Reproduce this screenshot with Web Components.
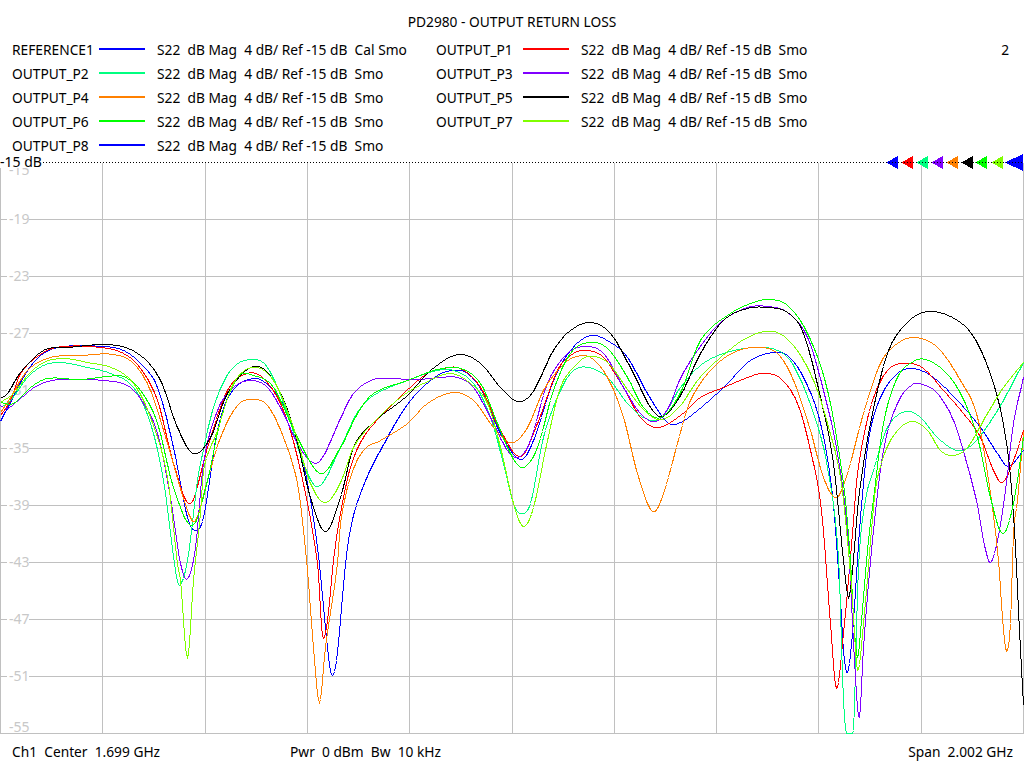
<!DOCTYPE html>
<html lang="en">
<head>
<meta charset="utf-8">
<title>PD2980 - OUTPUT RETURN LOSS</title>
<style>
html,body{margin:0;padding:0;background:#fff}
body{width:1024px;height:768px;overflow:hidden;font-family:"Noto Sans","Open Sans","Liberation Sans",sans-serif;font-size:13.75px;color:#000}
</style>
</head>
<body>
<vna-screen>
  <vna-title slot="title">PD2980 - OUTPUT RETURN LOSS</vna-title>
  <vna-legend slot="legend" channel="2">
    <vna-item slot="a" name="REFERENCE1" color="#0000ff">S22  dB Mag  4 dB/ Ref -15 dB  Cal Smo</vna-item>
    <vna-item slot="a" name="OUTPUT_P2" color="#00ff80">S22  dB Mag  4 dB/ Ref -15 dB  Smo</vna-item>
    <vna-item slot="a" name="OUTPUT_P4" color="#ff8000">S22  dB Mag  4 dB/ Ref -15 dB  Smo</vna-item>
    <vna-item slot="a" name="OUTPUT_P6" color="#00ff00">S22  dB Mag  4 dB/ Ref -15 dB  Smo</vna-item>
    <vna-item slot="a" name="OUTPUT_P8" color="#0000ff">S22  dB Mag  4 dB/ Ref -15 dB  Smo</vna-item>
    <vna-item slot="b" name="OUTPUT_P1" color="#ff0000">S22  dB Mag  4 dB/ Ref -15 dB  Smo</vna-item>
    <vna-item slot="b" name="OUTPUT_P3" color="#8000ff">S22  dB Mag  4 dB/ Ref -15 dB  Smo</vna-item>
    <vna-item slot="b" name="OUTPUT_P5" color="#000000">S22  dB Mag  4 dB/ Ref -15 dB  Smo</vna-item>
    <vna-item slot="b" name="OUTPUT_P7" color="#80ff00">S22  dB Mag  4 dB/ Ref -15 dB  Smo</vna-item>
  </vna-legend>
  <vna-chart slot="chart"></vna-chart>
  <vna-footer slot="footer">
    <span slot="ch">Ch1  Center  1.699 GHz</span>
    <span slot="pwr">Pwr  0 dBm  Bw  10 kHz</span>
    <span slot="span">Span  2.002 GHz</span>
  </vna-footer>
</vna-screen>
<script>
function def(name, css, html, extra){
  class C extends HTMLElement{
    constructor(){super();this.attachShadow({mode:'open'}).innerHTML='<style>'+css+'</style>'+html;}
    connectedCallback(){ if(extra) extra(this); }
  }
  customElements.define(name,C);
}
def('vna-screen',':host{display:flex;flex-direction:column;width:1024px;height:768px;white-space:pre}',
 '<slot name="title"></slot><slot name="legend"></slot><slot name="chart"></slot><slot name="footer"></slot>');
def('vna-title',':host{display:block;height:42px;box-sizing:border-box;padding-top:14px;line-height:16px;text-align:center}','<slot></slot>');
def('vna-legend',`:host{display:flex;height:112px;padding-left:12px;padding-right:15px}
 .col{display:flex;flex-direction:column;gap:8px;width:424px}
 .ch{margin-left:auto;line-height:16px;height:16px}`,
 '<div class="col"><slot name="a"></slot></div><div class="col"><slot name="b"></slot></div><div class="ch"></div>',
 el=>{el.shadowRoot.querySelector('.ch').textContent=el.getAttribute('channel');});
def('vna-item',`:host{display:flex;height:16px;line-height:16px;white-space:pre}
 .n{width:87px;flex:none}
 .l{width:46px;height:2px;margin:6px 12px 0 0;flex:none}`,
 '<span class="n"></span><span class="l"></span><slot></slot>',
 el=>{el.shadowRoot.querySelector('.n').textContent=el.getAttribute('name');
      el.shadowRoot.querySelector('.l').style.background=el.getAttribute('color');});
def('vna-footer',`:host{display:grid;grid-template-columns:278px 1fr auto;height:34px;box-sizing:border-box;padding:10px 11px 0 12px;line-height:16px;white-space:pre}`,
 '<slot name="ch"></slot><slot name="pwr"></slot><slot name="span"></slot>');

const TRACES=[
['#0000ff','0,421 10,402 27,370 43,353 63,346 103,346 123,350 140,363 157,387 173,447 187,517 195,530 203,517 217,430 230,393 253,378 270,387 287,413 303,463 317,547 327,647 331,674 336,660 347,547 360,493 387,437 410,400 437,375 453,370 467,373 483,393 500,433 520,459 533,440 553,380 570,350 590,335 610,342 627,357 647,393 667,422 680,422 697,410 723,387 750,360 773,352 787,355 803,377 820,423 832,495 840,600 843,650 847,672 852,633 860,517 868,440 880,397 897,373 913,368 933,377 957,400 980,427 997,453 1008,466 1023,450'],
['#ff0000','0,415 10,400 20,373 43,352 63,346 100,347 123,353 140,368 157,400 173,463 190,503 207,447 227,390 247,373 263,378 283,410 300,470 317,563 322,635 327,620 333,560 340,513 350,467 363,437 383,413 403,393 427,373 443,368 460,368 480,387 500,430 520,456 537,423 557,370 573,353 587,350 603,357 623,387 640,417 657,427 680,415 700,397 723,387 747,377 762,373 780,378 797,403 810,450 821,510 830,623 836,688 843,633 852,533 857,473 870,407 887,370 907,363 923,368 943,390 963,413 980,437 993,470 1002,482 1013,460 1023,430'],
['#00ff80','0,407 10,400 27,377 43,365 60,362 87,367 110,373 133,387 150,423 163,480 175,570 179,585 187,560 197,480 200,463 213,407 230,370 250,359 267,367 287,413 303,463 318,486 340,447 357,412 373,395 407,380 437,370 453,370 473,383 490,417 503,463 513,503 520,513 530,503 543,437 560,390 573,370 588,367 607,377 627,403 643,417 660,418 680,387 700,365 723,353 753,347 777,350 793,365 813,413 827,467 838,557 843,700 848,745 853,730 858,567 865,500 873,470 887,427 905,411 920,417 937,437 957,450 973,443 997,410 1023,362'],
['#8000ff','0,405 7,408 20,398 37,385 60,379 113,381 130,387 143,403 157,433 170,497 180,563 187,578 195,547 203,463 217,410 233,387 250,380 267,387 283,413 297,443 312,462 322,457 340,418 353,393 370,380 383,378 417,379 440,377 457,377 473,387 490,417 507,450 518,457 530,440 547,383 567,353 585,346 603,353 623,387 640,413 655,421 668,407 680,378 697,350 720,322 747,307 767,306 787,312 807,337 823,390 837,453 847,533 855,677 859,717 863,647 872,540 883,450 897,403 912,384 922,384 937,393 953,420 965,458 977,505 984,545 990,562 997,540 1005,490 1013,423 1023,377'],
['#ff8000','0,412 10,397 27,370 50,357 80,355 113,354 133,363 150,390 167,443 187,510 195,520 207,480 220,437 237,405 252,399 267,405 283,437 297,483 303,530 307,570 313,647 319,702 325,647 337,563 340,523 350,477 363,450 380,440 407,423 427,403 453,392 473,400 490,423 503,438 513,442 527,427 543,390 560,367 573,357 590,357 607,377 623,417 637,473 652,511 663,493 680,432 690,400 710,370 733,352 757,347 777,353 793,380 810,430 823,477 836,497 847,473 863,413 880,363 897,343 915,337 937,347 960,380 977,417 990,493 998,560 1002,617 1006,651 1010,623 1013,533 1017,500 1023,432'],
['#000000','0,398 7,393 20,372 43,350 67,347 113,344.5 140,355 160,380 177,427 193,453 210,437 227,393 253,366 273,380 293,427 310,497 325,531 340,497 353,447 373,422 407,395 430,370 458,354 480,363 500,387 517,401 532,392 553,350 570,330 590,322 610,333 633,373 650,407 662,416 680,395 700,353 723,320 747,308 767,307 787,312 803,333 820,397 833,463 843,560 848,597 852,570 858,500 870,423 887,353 907,322 928,311 957,320 977,343 997,397 1008,457 1014,530 1019,630 1023,705'],
['#00ff00','0,402 13,403 30,387 47,378 80,379 107,376 123,376 140,390 157,423 173,487 192,525 207,480 220,420 237,377 253,375 273,387 297,437 320,473 340,447 357,413 373,393 407,380 437,369 460,368 480,383 497,423 512,457 523,467 537,447 553,390 570,353 588,342 607,348 627,377 643,407 660,417 680,392 700,340 730,313 753,302 770,299 787,305 807,333 827,390 843,483 850,560 853,617 857,657 861,620 867,550 872,507 883,423 897,377 913,361 925,359 943,370 960,393 977,437 990,497 1002,533 1013,503 1023,437'],
['#80ff00','0,402 13,393 27,375 43,362 63,358 87,362 113,368 133,383 150,417 167,477 177,563 180,580 187,657 193,580 200,513 203,470 217,430 233,383 253,367 273,380 293,427 310,483 325,502 340,482 353,447 373,422 400,397 423,383 450,373 470,383 487,403 500,447 513,503 523,526 533,507 547,440 560,387 577,363 588,356 607,362 630,393 647,413 662,419 680,405 697,380 720,357 747,337 773,331 793,345 813,380 827,423 840,477 847,540 852,600 857,670 863,623 873,507 877,477 890,440 910,421 927,430 940,450 953,455 967,447 987,413 1003,387 1023,362']
];
function tracePts(s){
  const p=s.split(' ').map(a=>a.split(',').map(Number));
  const m=p.map((q,i)=>{
    const a=p[Math.max(i-1,0)],b=p[Math.min(i+1,p.length-1)];
    return (b[1]-a[1])/(b[0]-a[0]);
  });
  let out=[],k=0;
  for(let x=0;x<=1023;x++){
    while(k<p.length-2&&x>p[k+1][0])k++;
    const h=p[k+1][0]-p[k][0],t=(x-p[k][0])/h;
    const t2=t*t,t3=t2*t;
    const y=(2*t3-3*t2+1)*p[k][1]+(t3-2*t2+t)*h*m[k]+(-2*t3+3*t2)*p[k+1][1]+(t3-t2)*h*m[k+1];
    out.push((x+.5)+','+(Math.min(Math.round(y),733)+.5));
  }
  return out.join(' ');
}
function chartSvg(){
  let g='';
  const v=[0,102,205,307,409,512,614,716,818,921,1023];
  v.forEach(x=>g+=`<line x1="${x+.5}" x2="${x+.5}" y1="163" y2="734" class="g"/>`);
  const hs=[219,276,333,390,448,505,562,619,676,733];
  hs.forEach(y=>g+=`<line x1="0" x2="1024" y1="${y+.5}" y2="${y+.5}" class="g"/>`);
  const labels=[['-15',170],['-19',219],['-23',276],['-27',333],['-31',390],['-35',448],['-39',505],['-43',562],['-47',619],['-51',676],['-55',727]];
  labels.forEach(([t,y])=>{
    g+=`<rect x="7" y="${y-8}" width="22" height="${t==='-55'?14:16}" fill="#fff"/><text x="9" y="${y+5}" class="yl">${t}</text>`;
  });
  let tr='';
  TRACES.forEach(([c,s])=>tr+=`<polyline points="${tracePts(s)}" stroke="${c}" fill="none" stroke-width="1"/>`);
  const mk=['#0000ff','#ff0000','#00ff80','#8000ff','#ff8000','#000000','#00ff00','#80ff00'];
  const xs=[886,901,916,931,946,961,975,991];
  let marks='';
  mk.forEach((c,i)=>marks+=`<polygon points="${xs[i]},162.5 ${xs[i]+12},156 ${xs[i]+12},169" fill="${c}"/>`);
  marks+=`<polygon points="1005,162.5 1023,154 1023,171" fill="#0000ff"/>`;
  return `<svg width="1024" height="580" viewBox="0 154 1024 580" shape-rendering="crispEdges">
  ${g}${tr}${marks}
  <rect x="0" y="154" width="43" height="14" fill="#fff"/>
  <line x1="43" x2="1024" y1="162.5" y2="162.5" stroke="#000" stroke-dasharray="1 2"/>
  <text x="0" y="167" class="ref">-15 dB</text></svg>`;
}
def('vna-chart',`:host{display:block;width:1024px;height:580px}
 svg{display:block}
 .g{stroke:#c0c0c0;stroke-width:1}
 .yl{font:14px "Noto Sans","Open Sans",sans-serif;fill:#c8c8c8}
 .ref{font:14px "Noto Sans","Open Sans",sans-serif;fill:#000}`,chartSvg());
</script>
</body>
</html>
